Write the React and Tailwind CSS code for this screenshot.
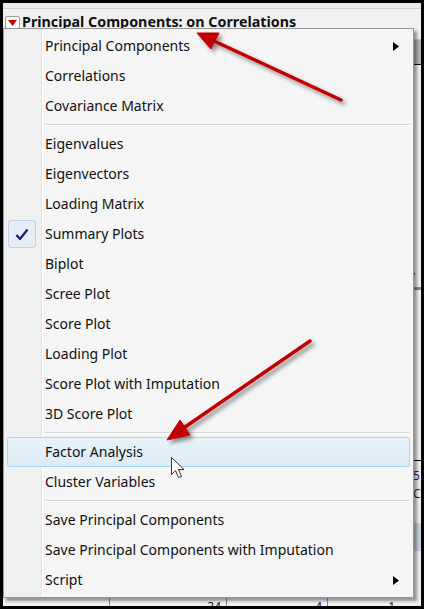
import React from 'react';

const groups = [
  [
    { label: 'Principal Components', sub: true },
    { label: 'Correlations' },
    { label: 'Covariance Matrix' },
  ],
  [
    { label: 'Eigenvalues' },
    { label: 'Eigenvectors' },
    { label: 'Loading Matrix' },
    { label: 'Summary Plots', checked: true },
    { label: 'Biplot' },
    { label: 'Scree Plot' },
    { label: 'Score Plot' },
    { label: 'Loading Plot' },
    { label: 'Score Plot with Imputation' },
    { label: '3D Score Plot' },
  ],
  [
    { label: 'Factor Analysis', hover: true },
    { label: 'Cluster Variables' },
  ],
  [
    { label: 'Save Principal Components' },
    { label: 'Save Principal Components with Imputation' },
    { label: 'Script', sub: true },
  ],
];

function MenuItem({ item }) {
  return (
    <div
      className={
        'mx-[3px] flex h-[30px] items-center rounded-[3px] border pr-[10px] ' +
        (item.hover
          ? 'border-[#a8d8ee] bg-[linear-gradient(to_bottom,#e8f3fa,#dcecf6)]'
          : 'border-transparent')
      }
    >
      <div className="flex h-[28px] w-[28px] shrink-0 items-center justify-center">
        {item.checked && (
          <div className="flex h-[28px] w-[28px] items-center justify-center rounded-[3px] border border-[#c3d0e4] bg-[#e6edf7]">
            <svg width="14" height="13" viewBox="0 0 14 13">
              <path d="M1.5 7 L5 11 L12.5 1.5" fill="none" stroke="#1a1a80" strokeWidth="2.2" strokeLinejoin="round" />
            </svg>
          </div>
        )}
      </div>
      <span className="ml-[9px] flex-1 text-[14px] leading-[20px] text-[#101010]">{item.label}</span>
      {item.sub && (
        <svg width="6" height="9" viewBox="0 0 6 9">
          <path d="M0 0 L6 4.5 L0 9 Z" fill="#000" />
        </svg>
      )}
    </div>
  );
}

function Separator() {
  return (
    <div className="flex h-[8px] flex-col justify-center pl-[41px] pr-[3px]">
      <div className="h-px bg-[#d7d7d7]" />
      <div className="h-px bg-white" />
    </div>
  );
}

export default function App() {
  return (
    <div
      className="h-[609px] w-[424px] bg-black pb-[3px] pl-[3px] pr-[3px] pt-[3px]"
      style={{ fontFamily: '"Noto Sans", "Open Sans", sans-serif' }}
    >
      <div className="relative flex h-full flex-col overflow-hidden bg-[#f0f0f0]">
        {/* window behind the menu */}
        <div className="h-[6px] border-b border-[#cfcfcf] bg-[#ebebeb]" />
        <div className="mt-[1px] flex h-[19px] items-center gap-[2px] pl-[2px] pt-[6px]">
          <div className="flex h-[13px] w-[15px] items-center justify-center rounded-[2px] border border-[#a0a0a0] bg-white">
            <svg width="9" height="6" viewBox="0 0 9 6">
              <path d="M0 0 L9 0 L4.5 6 Z" fill="#d40000" />
            </svg>
          </div>
          <span className="text-[14.3px] font-bold leading-none text-[#101010]">
            Principal Components: on Correlations
          </span>
        </div>
        <div className="flex flex-1 justify-end">
          <div className="flex w-[8px] flex-col">
            <div className="mt-[10px] h-[25px] border-t border-[#c8c8c8] bg-[#b4b4b4]" />
            <div className="h-px bg-black" />
            <div className="mt-[208px] h-[2px] w-[2px] bg-[#a02040]" />
            <div className="mt-[12px] h-[3px] bg-[#888]" />
            <div className="mt-[170px] h-px bg-black" />
            <div className="mt-[6px] text-[12px] leading-[18px] text-[#203050]">5</div>
            <div className="text-[12px] leading-[18px] text-[#203050]">C</div>
            <div className="mt-[20px] h-[28px] bg-[#c9d0de]" />
          </div>
        </div>
        <div className="flex h-[8px] items-start text-[12px] leading-[18px] text-[#222]">
          <div className="w-[106px]" />
          <div className="flex w-[117px] justify-end border-l border-[#888] pr-[5px]">24</div>
          <div className="flex w-[101px] justify-end border-l border-[#888] pr-[5px]">4</div>
          <div className="flex w-[76px] justify-end border-l border-[#888] pr-[8px]">1</div>
          <div className="border-l border-[#888]" />
        </div>

        {/* popup menu */}
        <div className="absolute left-0 top-[25px] w-[411px] border border-[#979797] bg-[linear-gradient(to_right,#f0f0f0_37px,#e2e3e3_37px,#e2e3e3_38px,#ffffff_38px,#ffffff_39px,#f5f5f5_39px)] py-[2px] shadow-[3px_3px_3px_rgba(0,0,0,0.4)]">
          {groups.map((g, gi) => (
            <div key={gi}>
              {gi > 0 && <Separator />}
              {g.map((item) => (
                <MenuItem key={item.label} item={item} />
              ))}
            </div>
          ))}
        </div>

        {/* annotation arrows and mouse cursor */}
        <svg className="pointer-events-none absolute left-[-3px] top-[-3px]" width="424" height="609">
          <defs>
            <filter id="sh" x="-20%" y="-20%" width="140%" height="140%">
              <feDropShadow dx="3" dy="3" stdDeviation="2" floodColor="#000" floodOpacity="0.45" />
            </filter>
          </defs>
          <g filter="url(#sh)" fill="#c00000" stroke="#c00000">
            <line x1="341" y1="100" x2="214" y2="41" strokeWidth="3.5" strokeLinecap="round" />
            <polygon points="197,33 219,33 211,49" strokeWidth="1" strokeLinejoin="round" />
            <line x1="310" y1="341" x2="185" y2="427" strokeWidth="3.5" strokeLinecap="round" />
            <polygon points="167,440 180,420 190,435" strokeWidth="1" strokeLinejoin="round" />
          </g>
          <path
            d="M171.5 457.5 L171.5 474.5 L175.5 470.5 L178.5 477.5 L181.5 476.5 L178.5 469.5 L184 469.5 Z"
            fill="#fff"
            stroke="#333"
            strokeWidth="1"
            strokeLinejoin="round"
          />
        </svg>
      </div>
    </div>
  );
}
